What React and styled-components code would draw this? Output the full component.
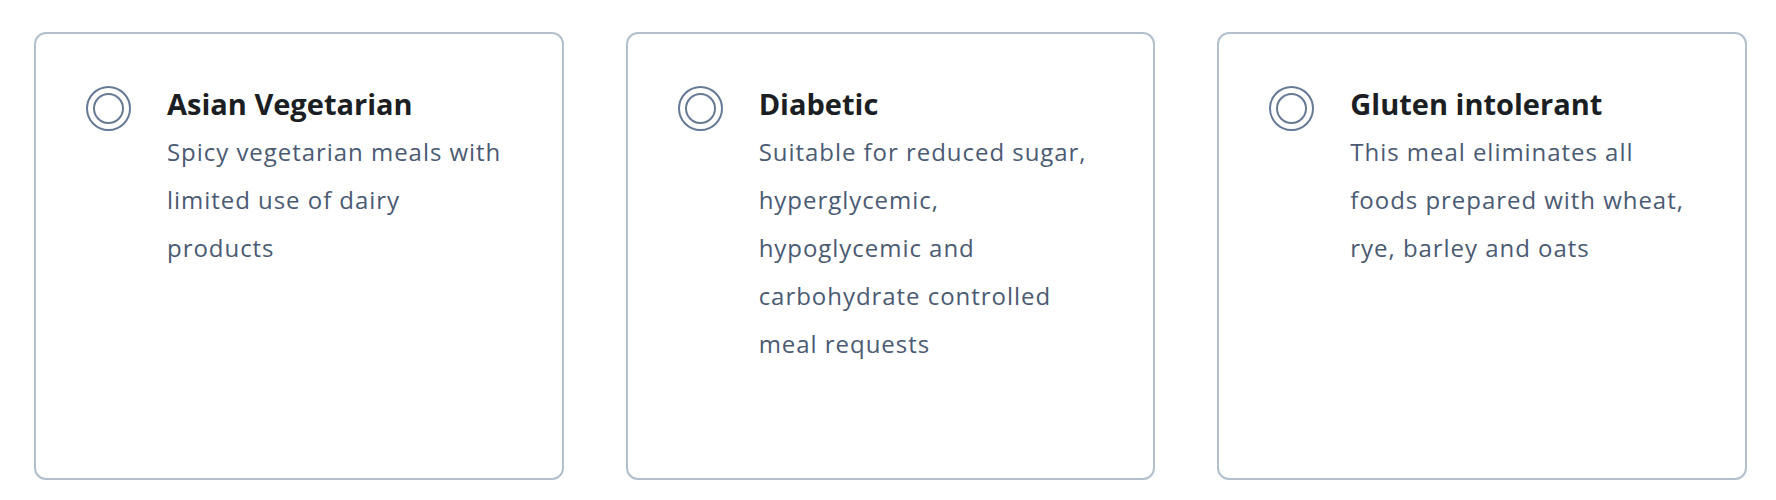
import React from 'react'
import styled, { createGlobalStyle } from 'styled-components'

const GlobalStyle = createGlobalStyle`
    body {
        margin: 0;
        background: #ffffff;
        font-family: "Open Sans", "Noto Sans", sans-serif;
    }
`

const Grid = styled.div`
    display: grid;
    grid-template-columns: repeat(3, 1fr);
    gap: 62px;
    padding: 32px 29px 20px 34px;
`

const Card = styled.label`
    display: flex;
    align-items: flex-start;
    gap: 36px;
    height: 448px;
    box-sizing: border-box;
    padding: 52px 40px 40px 50px;
    border: 2px solid #b3bfcd;
    border-radius: 12px;
    background: #ffffff;
    cursor: pointer;
`

const Radio = styled.span`
    flex: none;
    width: 45px;
    height: 45px;
    box-sizing: border-box;
    border: 2px solid #667a96;
    border-radius: 50%;
    display: flex;
    align-items: center;
    justify-content: center;

    &::after {
        content: "";
        width: 31px;
        height: 31px;
        box-sizing: border-box;
        border: 2px solid #667a96;
        border-radius: 50%;
    }
`

const Body = styled.div`
    display: flex;
    flex-direction: column;
    gap: 6px;
    width: 342px;
`

const Title = styled.h3`
    margin: 0;
    font-size: 29px;
    line-height: 36px;
    font-weight: 700;
    color: #1b1e23;
`

const Text = styled.p`
    margin: 0;
    font-size: 24px;
    line-height: 48px;
    letter-spacing: 0.04em;
    color: #4b5a73;
`

const meals = [
    {
        title: 'Asian Vegetarian',
        text: 'Spicy vegetarian meals with limited use of dairy products',
    },
    {
        title: 'Diabetic',
        text: 'Suitable for reduced sugar, hyperglycemic, hypoglycemic and carbohydrate controlled meal requests',
    },
    {
        title: 'Gluten intolerant',
        text: 'This meal eliminates all foods prepared with wheat, rye, barley and oats',
    },
]

const App = () => {
    return (
        <>
            <GlobalStyle />
            <Grid>
                {meals.map((meal) => (
                    <Card key={meal.title}>
                        <Radio />
                        <Body>
                            <Title>{meal.title}</Title>
                            <Text>{meal.text}</Text>
                        </Body>
                    </Card>
                ))}
            </Grid>
        </>
    )
}

export default App
